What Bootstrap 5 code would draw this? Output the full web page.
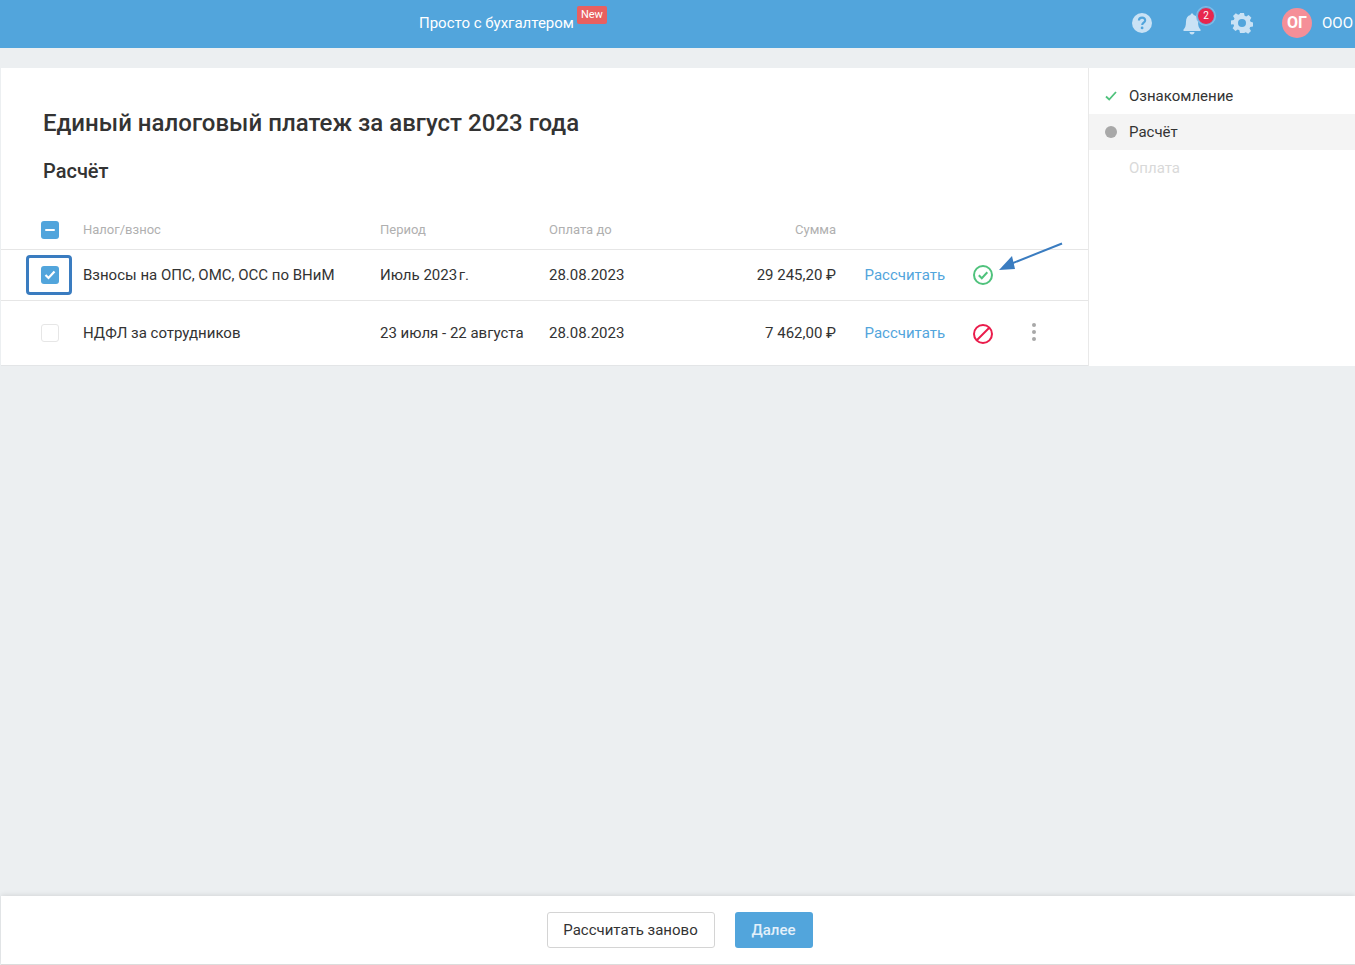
<!doctype html>
<html lang="ru">
<head>
<meta charset="utf-8">
<title>Единый налоговый платеж</title>
<link href="https://cdn.jsdelivr.net/npm/bootstrap@5.3.0/dist/css/bootstrap.min.css" rel="stylesheet">
<style>
html,body{height:100%}
body{font-family:Roboto,"Liberation Sans",sans-serif;background:#eceff1;color:#333;font-size:15px;height:965px;overflow:hidden}
.app-shell{height:965px}
.top-bar{height:48px;background:#52a5dc;color:#fff;padding-bottom:2px}
.promo{margin-left:419px;font-size:15px;color:#fff}
.new-tag{background:#e86060;color:#fff;font-size:11px;line-height:15px;height:18px;padding:1px 4px 0;border-radius:2px;margin-left:3px;margin-top:-17px}
.top-icons{padding-right:2px}
.ico-btn{width:22px;height:22px;color:#c9e2f5}
.bell-wrap{margin-left:28px}
.bell-dot{top:-5px;right:-12px;width:18px;height:18px;border-radius:50%;background:#e8264e;color:#fff;font-size:10px;line-height:16px;text-align:center;border:1px solid #6db4e4;box-shadow:0 0 0 1px #7fbde8}
.gear{margin-left:28px}
.avatar{width:30px;height:30px;border-radius:50%;background:#f58f98;color:#fff;font-weight:700;font-size:16px;margin-left:29px;line-height:30px;text-align:center}
.org{margin-left:10px;font-size:15px;color:#fff}
.work-area{margin-top:20px;height:298px}
.main-panel{margin-left:1px;width:1087px;background:#fff;border-bottom:1px solid #e3e5e7}
.side-panel{width:267px;background:#fff;border-left:1px solid #e9e9e9;padding-top:10px}
.page-title{font-size:24px;font-weight:500;line-height:28px;margin:41px 0 0 42px;color:#333;letter-spacing:.024px}
.sub-title{font-size:20px;font-weight:500;line-height:24px;margin:22px 0 0 42px;color:#333}
.tax-table{width:1087px;margin-top:29px;table-layout:fixed;border-collapse:collapse}
.tax-table th{font-size:13px;font-weight:400;color:#b0b0b0;height:37px;padding:0 0 1px;vertical-align:middle}
.tax-table td{padding:0;vertical-align:middle;color:#333;font-size:15px}
.tax-table tr.r1 td{height:51px}
.tax-table tr.r2 td{height:64px;padding-top:2px}
.tax-table tr.r1 td.txt{padding-top:2px}
.tax-table td svg{display:block}
.tax-table tr.r2 td.dots{padding-top:0}
.tax-table tr.r2 td.stop{padding-top:3px}
.tax-table thead tr,.tax-table tr.r1{border-bottom:1px solid #e6e6e6}
.cb{width:18px;height:18px;border-radius:3px;margin-left:40px;display:flex;align-items:center;justify-content:center}
.cb.on{background:#52a5dc}
.cb.off{border:1px solid #e6e6e6;background:#fff}
.calc{color:#52a5dc;text-decoration:none;margin-left:28.5px}
.money{text-align:right}
.highlight{position:absolute;left:25px;top:5px;width:46px;height:40px;border:3px solid #3a7cc0;border-radius:4px}
.cb-cell{position:relative}
.arrow{position:absolute;left:996px;top:240px}
.step{height:36px;display:flex;align-items:center;font-size:15px;color:#333}
.step.cur{background:#f4f4f4}
.step.todo{color:#d9d9d9}
.step-mark{width:40px;padding-left:16px;display:flex;align-items:center}
.bottom-bar{position:absolute;left:1px;right:0;top:896px;height:69px;background:#fff;border-bottom:1px solid #dcdcdc;box-shadow:0 -1px 5px rgba(0,0,0,.1);gap:20px;padding-left:3px}
.btn-again{font-size:15px;color:#333;background:#fff;border:1px solid #d4d4d4;border-radius:3px;width:168px;height:36px;padding:1px 0 0}
.btn-next{font-size:15px;font-weight:500;color:#e3f0fa;background:#52a5dc;border:0;border-radius:3px;width:78px;height:36px;padding:1px 0 0}
</style>
</head>
<body>
<div class="app-shell position-relative">
  <header class="top-bar d-flex align-items-center">
    <span class="promo">Просто с бухгалтером</span>
    <span class="new-tag">New</span>
    <div class="top-icons ms-auto d-flex align-items-center">
      <svg class="ico-btn" viewBox="0 0 22 22" aria-hidden="true"><circle cx="11" cy="11" r="10" fill="currentColor"/><path d="M7.900 8.600c0-1.900 1.400-3 3.200-3s3.100 1.100 3.100 2.700c0 2.300-3 2.400-3 4.600" fill="none" stroke="#52a5dc" stroke-width="2.100"/><circle cx="11.100" cy="15.900" r="1.400" fill="#52a5dc"/></svg>
      <div class="bell-wrap position-relative" style="width:22px;height:22px">
        <svg class="ico-btn" viewBox="0 0 22 22" aria-hidden="true"><path d="M11 0.500c1 0 1.500.7 1.500 1.500 3 .7 4.500 3.200 4.500 6.500 0 4.500 1 6.500 2.500 8v1.500h-17V16.500c1.500-1.500 2.500-3.500 2.500-8 0-3.300 1.500-5.800 4.500-6.500 0-.8.500-1.500 1.500-1.500zM8.500 19h5c0 1.500-1 2.500-2.500 2.500S8.500 20.500 8.500 19z" fill="currentColor"/></svg>
        <span class="bell-dot position-absolute">2</span>
      </div>
      <svg class="ico-btn gear" viewBox="0 0 22 22" aria-hidden="true"><path fill="currentColor" fill-rule="evenodd" d="M9 1h4l.6 2.800 1.600.7 2.400-1.500 2.800 2.800-1.500 2.400.7 1.600 2.400.6v4l-2.800.6-.7 1.600 1.500 2.400-2.800 2.800-2.400-1.500-1.600.7L13 21H9l-.6-2.800-1.600-.7-2.400 1.500-2.800-2.800 1.500-2.400-.7-1.600L0 12.600v-4l2.800-.6.7-1.600L2 4l2.800-2.800 2.400 1.500 1.600-.7zM11 7a4 4 0 1 0 0 8 4 4 0 0 0 0-8z"/></svg>
      <div class="avatar">ОГ</div>
      <span class="org">ООО</span>
    </div>
  </header>

  <div class="work-area d-flex">
    <main class="main-panel">
      <h1 class="page-title">Единый налоговый платеж за август 2023 года</h1>
      <h2 class="sub-title">Расчёт</h2>
      <table class="tax-table">
        <colgroup><col style="width:82px"><col style="width:297px"><col style="width:169px"><col style="width:130px"><col style="width:157px"><col style="width:137px"><col style="width:59px"><col></colgroup>
        <thead>
          <tr>
            <th><div class="cb on"><svg width="10" height="2" viewBox="0 0 10 2" aria-hidden="true"><rect width="10" height="2" rx="1" fill="#fff"/></svg></div></th>
            <th>Налог/взнос</th><th>Период</th><th>Оплата до</th><th class="money">Сумма</th><th></th><th></th><th></th>
          </tr>
        </thead>
        <tbody>
          <tr class="r1">
            <td class="cb-cell"><div class="cb on"><svg width="12" height="10" viewBox="0 0 12 10" aria-hidden="true"><path d="M1.500 5l3 3 6-6.500" fill="none" stroke="#fff" stroke-width="2.200"/></svg></div><div class="highlight"></div></td>
            <td class="txt">Взносы на ОПС, ОМС, ОСС по ВНиМ</td><td class="txt">Июль 2023&#8202;г.</td><td class="txt">28.08.2023</td><td class="txt money">29 245,20 ₽</td>
            <td class="txt"><a class="calc" href="#">Рассчитать</a></td>
            <td><svg width="20" height="20" viewBox="0 0 20 20" aria-hidden="true"><circle cx="10" cy="10" r="9" fill="none" stroke="#4fc27c" stroke-width="2"/><path d="M5.800 10.200l3 3 5.500-6" fill="none" stroke="#4fc27c" stroke-width="2"/></svg></td>
            <td></td>
          </tr>
          <tr class="r2">
            <td><div class="cb off"></div></td>
            <td>НДФЛ за сотрудников</td><td>23 июля - 22 августа</td><td>28.08.2023</td><td class="money">7 462,00 ₽</td>
            <td><a class="calc" href="#">Рассчитать</a></td>
            <td class="stop"><svg width="20" height="20" viewBox="0 0 20 20" aria-hidden="true"><circle cx="10" cy="10" r="9" fill="none" stroke="#ea1c4b" stroke-width="2"/><path d="M4 16L16 4" stroke="#ea1c4b" stroke-width="2"/></svg></td>
            <td class="dots"><svg width="4" height="18" viewBox="0 0 4 18" aria-hidden="true"><circle cx="2" cy="2" r="2" fill="#a8a8a8"/><circle cx="2" cy="9" r="2" fill="#a8a8a8"/><circle cx="2" cy="16" r="2" fill="#a8a8a8"/></svg></td>
          </tr>
        </tbody>
      </table>
    </main>
    <aside class="side-panel">
      <div class="step"><span class="step-mark"><svg width="12" height="10" viewBox="0 0 12 10" aria-hidden="true"><path d="M1 5.500l3.200 3L11 1" fill="none" stroke="#4fc27c" stroke-width="1.800"/></svg></span>Ознакомление</div>
      <div class="step cur"><span class="step-mark"><svg width="12" height="12" viewBox="0 0 12 12" aria-hidden="true"><circle cx="6" cy="6" r="6" fill="#a8a8a8"/></svg></span>Расчёт</div>
      <div class="step todo"><span class="step-mark"></span>Оплата</div>
    </aside>
  </div>

  <svg class="arrow" width="70" height="34" viewBox="0 0 70 34" aria-hidden="true"><path d="M66 3.500L12 25" stroke="#3a7cc0" stroke-width="2"/><path d="M3 30l13-14 3 13z" fill="#3a7cc0"/></svg>

  <footer class="bottom-bar d-flex align-items-center justify-content-center">
    <button class="btn btn-again" type="button">Рассчитать заново</button>
    <button class="btn btn-next" type="button">Далее</button>
  </footer>
</div>
<script src="https://cdn.jsdelivr.net/npm/bootstrap@5.3.0/dist/js/bootstrap.bundle.min.js"></script>
</body>
</html>
